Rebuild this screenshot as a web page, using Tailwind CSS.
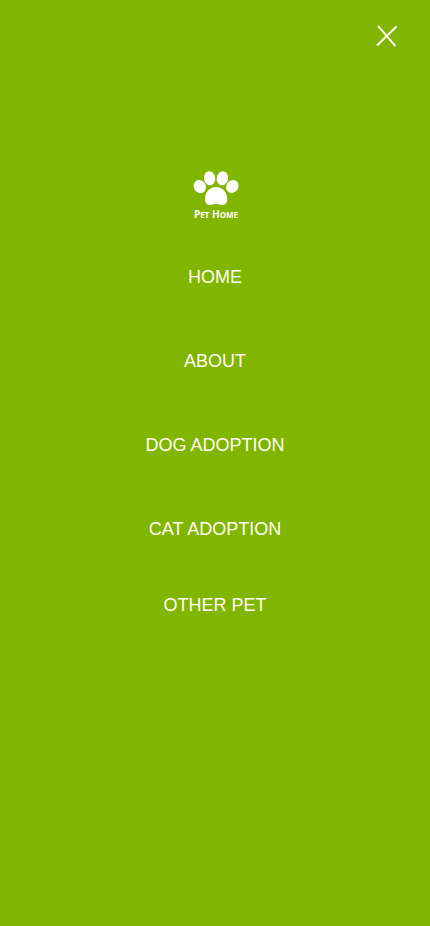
<!DOCTYPE html>
<html lang="en">
<head>
<meta charset="utf-8">
<meta name="viewport" content="width=device-width, initial-scale=1">
<title>Pet Home</title>
<script src="https://cdn.jsdelivr.net/npm/@tailwindcss/browser@4"></script>
</head>
<body class="bg-[#80b500] font-['Liberation_Sans',Arial,sans-serif] text-[#fffff5]">
<div class="flex min-h-screen flex-col">
  <header class="flex justify-end px-7 pt-5">
    <button type="button" aria-label="Close menu" class="flex size-8 items-center justify-center">
      <svg class="size-6" viewBox="0 0 24 24" fill="none" stroke="currentColor" stroke-width="2" aria-hidden="true"><path d="M4 1.800 21.500 22.200M22.500 2.500 3 21.500"/></svg>
    </button>
  </header>
  <nav aria-label="Main" class="flex flex-col items-center pt-28">
    <a href="#" aria-label="Pet Home">
      <svg class="size-15" viewBox="0 0 60 60" fill="white" aria-hidden="true">
        <ellipse cx="14.800" cy="22.500" rx="6" ry="6.700" transform="rotate(-32 14.800 22.500)"/>
        <ellipse cx="24.600" cy="14.300" rx="5.700" ry="7" transform="rotate(-8 24.600 14.300)"/>
        <ellipse cx="37.400" cy="14.300" rx="5.700" ry="7" transform="rotate(12 37.400 14.300)"/>
        <ellipse cx="47.300" cy="22.500" rx="6" ry="6.700" transform="rotate(35 47.300 22.500)"/>
        <path d="M31 23C24.500 23 20 28.500 20 35C20 39.300 22 41 25 41C27.500 41 28.500 39.700 31 39.700C33.500 39.700 34.700 41 37.200 41C40.200 41 42.200 39.300 42.200 35C42.200 28.500 37.500 23 31 23Z"/>
        <text x="31" y="54" text-anchor="middle" font-family="Open Sans, sans-serif" font-weight="700" font-size="10">P<tspan font-size="8">ET</tspan> H<tspan font-size="8">OME</tspan></text>
      </svg>
    </a>
    <ul class="flex flex-col items-center gap-14 pt-[39px] text-lg">
      <li><a href="#">HOME</a></li>
      <li><a href="#">ABOUT</a></li>
      <li><a href="#">DOG ADOPTION</a></li>
      <li><a href="#">CAT ADOPTION</a></li>
      <li class="-mt-2"><a href="#">OTHER PET</a></li>
    </ul>
  </nav>
</div>
</body>
</html>
